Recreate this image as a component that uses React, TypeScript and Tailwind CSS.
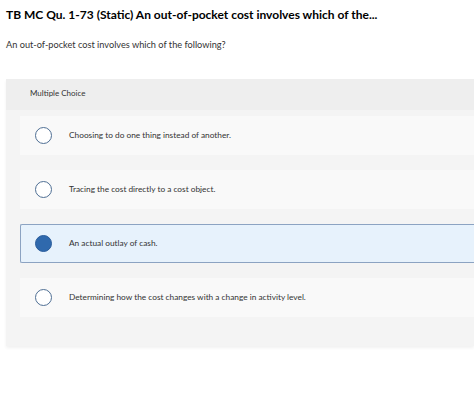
const options = [
  'Choosing to do one thing instead of another.',
  'Tracing the cost directly to a cost object.',
  'An actual outlay of cash.',
  'Determining how the cost changes with a change in activity level.',
];

const selected = 2;

function Radio({ checked }: { checked: boolean }) {
  return checked ? (
    <span className="block h-[17px] w-[17px] shrink-0 rounded-full border border-[#2a5d9c] bg-[#2f69ad]" />
  ) : (
    <span className="block h-[17px] w-[17px] shrink-0 rounded-full border-[1.5px] border-[#4f6f94] bg-white" />
  );
}

export default function App() {
  return (
    <div className="h-[400px] w-[474px] overflow-hidden bg-white font-['Lato',sans-serif] text-[#222]">
      <h1 className="pl-[6px] pt-[6px] text-[12px] font-bold leading-[18px] text-black whitespace-nowrap">
        TB MC Qu. 1-73 (Static) An out-of-pocket cost involves which of the...
      </h1>
      <p className="mt-[15px] pl-[6px] text-[9.2px] leading-[12px] text-[#333]">
        An out-of-pocket cost involves which of the following?
      </p>
      <div className="ml-[6px] mt-[28px] bg-[#f4f4f4] pb-[29px] shadow-[0_2px_3px_rgba(0,0,0,0.06)]">
        <div className="bg-[#eeeeee] pb-[11px] pl-[24px] pt-[9px] text-[8px] leading-[11px] text-[#333]">
          Multiple Choice
        </div>
        <div className="flex flex-col gap-[15px] pl-[14px] pt-[6px]">
          {options.map((o, i) => (
            <div
              key={o}
              className={
                i === selected
                  ? 'flex h-[39px] items-center rounded-l-[2px] border border-r-0 border-[#8ca3c2] bg-[#e7f2fc] pl-[14px]'
                  : 'flex h-[39px] items-center bg-[#f9f9f9] pl-[15px]'
              }
            >
              <Radio checked={i === selected} />
              <span className="ml-[17px] text-[8.3px] leading-[11px] text-[#333]">{o}</span>
            </div>
          ))}
        </div>
      </div>
    </div>
  );
}
